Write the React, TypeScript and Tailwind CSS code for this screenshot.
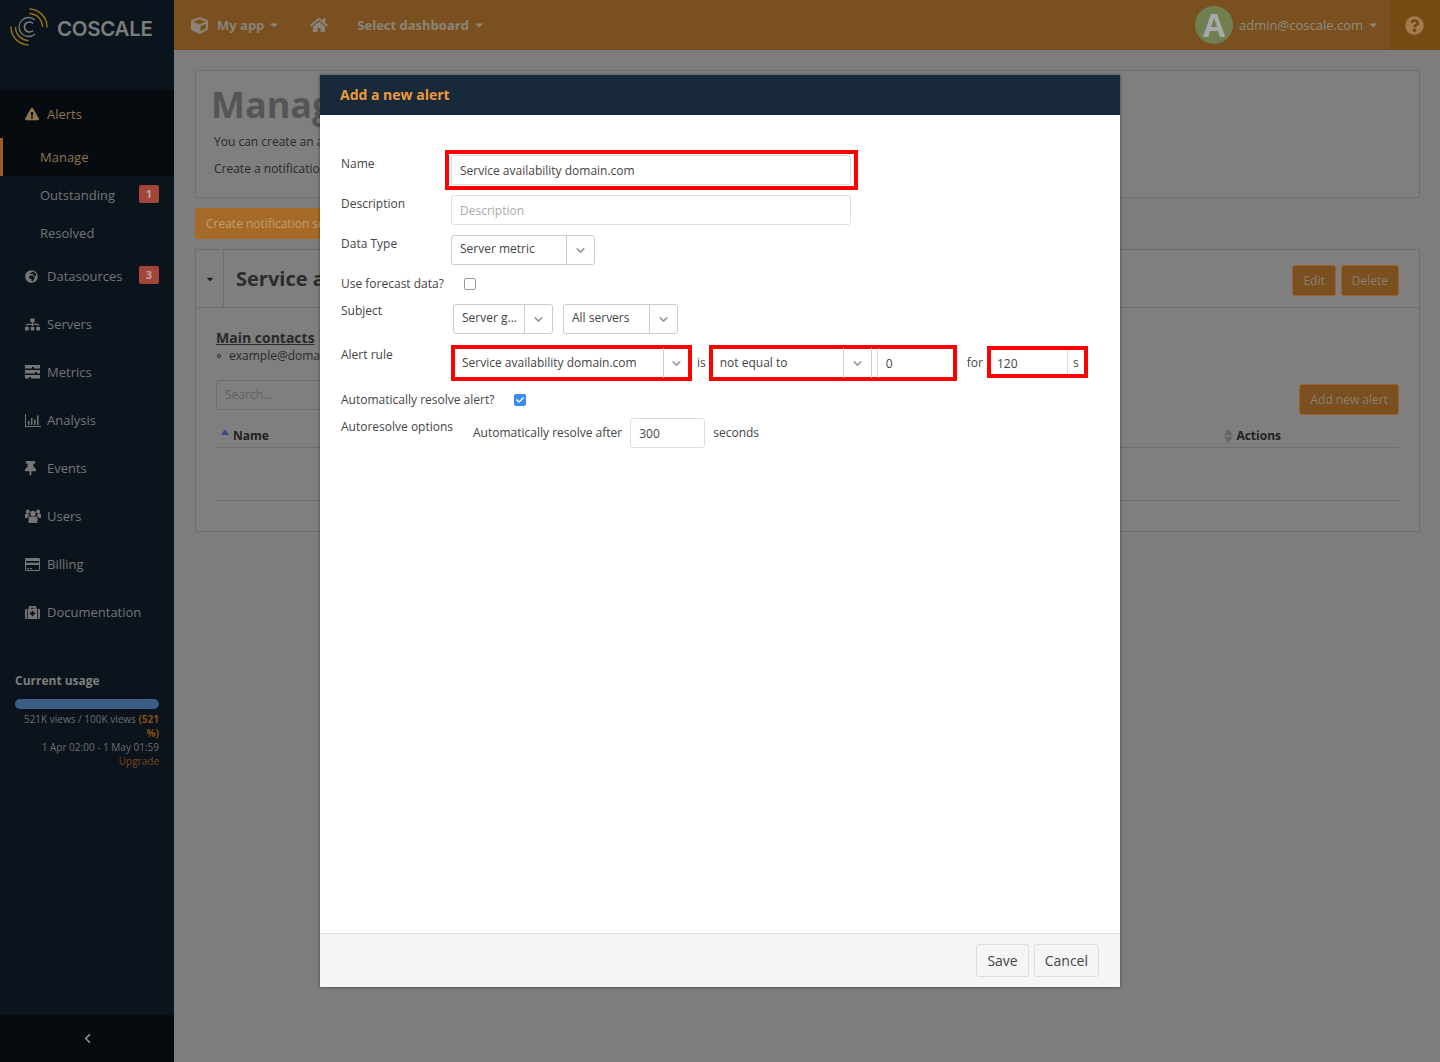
import type { ReactNode } from "react";
import { ChevronDown } from "lucide-react";
import {
  FaCaretDown,
  FaCheck,
  FaChevronLeft,
  FaCube,
  FaExclamationTriangle,
  FaGlobeAfrica,
  FaHome,
  FaMedkit,
  FaQuestionCircle,
  FaSitemap,
  FaThumbtack,
} from "react-icons/fa";

function MetricsIcon() {
  return (
    <svg width="15" height="14" viewBox="0 0 15 14" fill="currentColor">
      <path d="M0 0h15v3.500H9V2H7v1.500H0z" />
      <path d="M0 5h15v3.500h-3V7h-2v1.500H0z" />
      <path d="M0 10h15v3.500H6V12H4v1.500H0z" />
    </svg>
  );
}

function AnalysisIcon() {
  return (
    <svg width="16" height="13" viewBox="0 0 16 13" fill="currentColor">
      <path d="M0 0h1v12h15v1H0z" />
      <path d="M3 7h1.500v4H3zM6 4h1.500v7H6zM9 5.500h1.500V11H9zM12 1.500h1.500V11H12z" />
    </svg>
  );
}

function UsersIcon() {
  return (
    <svg width="16" height="14" viewBox="0 0 16 14" fill="currentColor">
      <circle cx="8" cy="4.500" r="2.800" />
      <circle cx="2.800" cy="2.500" r="2" />
      <circle cx="13.200" cy="2.500" r="2" />
      <path d="M3.500 9.500C3.500 8 4.500 7.500 5.500 7.500h5c1 0 2 .5 2 2V13c0 .6-.5 1-1 1h-7c-.6 0-1-.4-1-1z" />
      <path d="M0 6c0-1 .7-1.500 1.500-1.500h2c-.2 1 .2 1.800 1 2.400-1.200.3-2 1-2.200 2.100H1c-.6 0-1-.4-1-1z" />
      <path d="M16 6c0-1-.7-1.500-1.500-1.500h-2c.2 1-.2 1.800-1 2.400 1.200.3 2 1 2.200 2.100H15c.6 0 1-.4 1-1z" />
    </svg>
  );
}

function CardIcon() {
  return (
    <svg width="15" height="13" viewBox="0 0 15 13" fill="currentColor">
      <path d="M1.500 0h12c.8 0 1.500.7 1.500 1.500v10c0 .8-.7 1.500-1.500 1.500h-12C.7 13 0 12.300 0 11.500v-10C0 .7.700 0 1.500 0zM1 3v1.800h13V3zm0 4v4.500c0 .3.200.5.500.5h12c.3 0 .5-.2.500-.5V7z" fillRule="evenodd" />
      <path d="M2 10h2v1H2zM5 10h2v1H5z" />
    </svg>
  );
}

const navItems = [
  { label: "Datasources", icon: <FaGlobeAfrica size={13} />, badge: "3" },
  { label: "Servers", icon: <FaSitemap size={15} /> },
  { label: "Metrics", icon: <MetricsIcon /> },
  { label: "Analysis", icon: <AnalysisIcon /> },
  { label: "Events", icon: <FaThumbtack size={15} className="-ml-[2px]" /> },
  { label: "Users", icon: <UsersIcon /> },
  { label: "Billing", icon: <CardIcon /> },
  { label: "Documentation", icon: <FaMedkit size={15} /> },
];

function Badge({ value }: { value: string }) {
  return (
    <span className="-mt-[2px] flex h-[18px] w-5 items-center justify-center rounded-[2px] bg-[#a2463a] text-[11px] font-bold text-[#b9a8a4]">
      {value}
    </span>
  );
}

function Logo() {
  return (
    <svg width="38" height="38" viewBox="0 0 38 38" fill="none" className="shrink-0">
      <g stroke="#8f6c17" strokeWidth="1.5" strokeLinecap="round">
        <path d="M20 1a18 18 0 0 1 17 18" />
        <path d="M20 5.500a13.500 13.500 0 0 1 12.500 13" />
        <path d="M18 37a18 18 0 0 1-17-18" />
        <path d="M18 32.500a13.500 13.500 0 0 1-12.500-13" />
      </g>
      <path d="M25 12a9.500 9.500 0 1 0 0 14" stroke="#787878" strokeWidth="1.300" />
      <path d="M23 15.500a5 5 0 1 0 0 7" stroke="#7c7c7c" strokeWidth="1.700" />
    </svg>
  );
}

function Sidebar() {
  return (
    <aside className="flex w-[174px] shrink-0 flex-col bg-[#0b141c] text-[13px] text-[#767676]">
      <div className="flex h-[90px] items-start gap-[9px] pl-[10px] pt-2">
        <Logo />
        <span className="mt-[6px] font-['Inter',sans-serif] text-[20.5px] font-semibold tracking-[-0.3px] text-[#7c7c7c]">COSCALE</span>
      </div>

      <div className="bg-[#060b10]">
        <div className="flex h-12 items-center gap-2 pl-[25px] text-[#8f7450]">
          <FaExclamationTriangle size={14} />
          <span className="mt-[2px]">Alerts</span>
        </div>
        <div className="flex h-[38px] items-center border-l-[3px] border-[#a05c24] pl-[37px] text-[#8f7450]">
          <span className="mt-[2px]">Manage</span>
        </div>
      </div>
      <div className="flex h-[38px] items-center justify-between pl-10 pr-[15px]">
        <span className="mt-[2px]">Outstanding</span>
        <Badge value="1" />
      </div>
      <div className="flex h-[38px] items-center pl-10">
        <span className="mt-[2px]">Resolved</span>
      </div>

      {navItems.map((item) => (
        <div key={item.label} className="flex h-12 items-center pl-[25px] pr-[15px]">
          <span className="flex w-[22px] shrink-0 items-center">{item.icon}</span>
          <span className="mt-[2px] flex-1">{item.label}</span>
          {item.badge && <Badge value={item.badge} />}
        </div>
      ))}

      <div className="flex-1 px-[15px] pt-9">
        <div className="text-[12px] leading-[18px] font-bold text-[#7e7e7e]">Current usage</div>
        <div className="mt-[9px] h-2.5 rounded-[5px] bg-[#3b5e86]" />
        <div className="mt-[3px] text-right text-[10px] leading-[14px] text-[#6e6e6e]">
          521K views / 100K views <span className="font-bold text-[#85500f]">(521 %)</span>
          <br />
          1 Apr 02:00 - 1 May 01:59
          <br />
          <span className="text-[#7c4318]">Upgrade</span>
        </div>
      </div>

      <div className="flex h-[47px] items-center justify-center bg-[#060b10] text-[#8a8a8a]">
        <FaChevronLeft size={11} />
      </div>
    </aside>
  );
}

function TopBar() {
  return (
    <header className="flex h-[50px] items-center bg-[#7a5020] text-[13px] text-[#8a8478]">
      <FaCube size={17} className="ml-[17px] mr-[9px]" />
      <span className="mt-[2px] font-bold">My app</span>
      <FaCaretDown size={12} className="ml-[4px]" />
      <FaHome size={18} className="ml-[30px] mr-[29px]" />
      <span className="mt-[2px] font-bold">Select dashboard</span>
      <FaCaretDown size={12} className="ml-[4px]" />
      <div className="ml-auto flex h-full items-center">
        <span className="flex h-[38px] w-[38px] items-center justify-center rounded-full bg-[#6f7f50] text-[32px] font-bold text-[#a9a9a9]">
          A
        </span>
        <span className="ml-[6px] mt-[2px] text-[#8c8c80]">admin@coscale.com</span>
        <FaCaretDown size={12} className="ml-[4px]" />
        <div className="ml-[11px] flex h-full w-[50px] items-center justify-center bg-[#764a12] pr-[1px] text-[#a07c50]">
          <FaQuestionCircle size={19} />
        </div>
      </div>
    </header>
  );
}

function OrangeButton({ children }: { children: ReactNode }) {
  return (
    <span className="flex h-[31px] items-center rounded-[3px] border border-[#a0602a] bg-[#7a5020] px-[10px] text-[12px] text-[#8a7f70]">
      {children}
    </span>
  );
}

function Page() {
  return (
    <main className="min-w-0 flex-1 bg-[#7d7d7d]">
      <TopBar />
      <div className="pl-[21px] pr-5 pt-5">
        <section className="h-[128px] border border-[#6e6e6e] bg-[#7f7f7f] pl-[16px] text-[12px] text-[#2a2a2a]">
          <h1 className="-ml-[1px] mt-[12px] text-[36px] leading-[44px] font-bold text-[#555]">Manage alerts</h1>
          <p className="ml-[2px] mt-[6px] leading-[18px]">You can create an alert for any metric</p>
          <p className="ml-[2px] mt-[9px] leading-[18px]">Create a notification setting first</p>
        </section>

        <span className="mt-[10px] flex h-[31px] w-fit items-center rounded-[3px] bg-[#a56a28] px-[11px] text-[12px] text-[#c0a070]">
          Create notification setting
        </span>

        <section className="mt-[10px] h-[283px] border border-[#6e6e6e] bg-[#7f7f7f]">
          <div className="flex h-[58px] items-center border-b border-[#6e6e6e] pr-5">
            <div className="flex h-full w-[28px] items-center justify-center border-r border-[#6e6e6e] text-[#222]">
              <FaCaretDown size={10} />
            </div>
            <span className="ml-3 flex-1 text-[20px] font-bold text-[#2c2c2c]">Service availability</span>
            <div className="mt-[4px] flex gap-[5px]">
              <OrangeButton>Edit</OrangeButton>
              <OrangeButton>Delete</OrangeButton>
            </div>
          </div>

          <div className="px-5 text-[12px] text-[#2a2a2a]">
            <div className="mt-[20px] text-[14px] leading-[19px] font-bold underline">Main contacts</div>
            <div className="mt-[1px] flex items-center leading-[16px]">
              <span className="mx-[1px] h-1 w-1 rounded-full border border-[#2a2a2a]" />
              <span className="ml-[7px]">example@domain.com</span>
            </div>

            <div className="mt-[16px] flex items-start justify-between">
              <span className="flex h-[30px] w-[240px] items-center rounded-[3px] border border-[#6e6e6e] px-2 text-[#606060]">
                Search...
              </span>
              <div className="mt-[4px]">
                <OrangeButton>Add new alert</OrangeButton>
              </div>
            </div>

            <div className="flex h-[33px] items-center justify-between border-b border-[#6e6e6e] pl-[5px] pr-[118px] pt-[10px] font-bold text-[#222]">
              <span className="flex items-center gap-1">
                <svg width="8" height="6" viewBox="0 0 8 6" className="-mt-2" fill="#3f4a8a">
                  <path d="M4 0l4 6H0z" />
                </svg>
                Name
              </span>
              <span className="flex items-center gap-[3px]">
                <svg width="9" height="14" viewBox="0 0 9 14" fill="#666">
                  <path d="M4.500 0L9 6.300H0zM4.500 14L0 7.700h9z" />
                </svg>
                Actions
              </span>
            </div>
            <div className="h-[53px] border-b border-[#6e6e6e]" />
          </div>
        </section>
      </div>
    </main>
  );
}

function Field({ children, className = "" }: { children: ReactNode; className?: string }) {
  return (
    <span className={`flex h-[30px] items-center rounded-[3px] border border-[#ddd] bg-white px-2 pt-[2px] text-[#444] ${className}`}>
      {children}
    </span>
  );
}

function Select({
  value,
  className = "",
  cellClass = "w-[28px]",
  square = false,
}: {
  value: string;
  className?: string;
  cellClass?: string;
  square?: boolean;
}) {
  return (
    <span className={`flex h-[30px] items-center border-[#ccc] text-[#444] ${square ? "" : "rounded-[3px] border"} ${className}`}>
      <span className={`flex-1 truncate ${square ? "pl-[7px]" : "-mt-[2px] pl-2"}`}>{value}</span>
      <span className={`flex h-full items-center justify-center border-l border-[#ccc] text-[#999] ${cellClass}`}>
        <ChevronDown size={13} strokeWidth={3} />
      </span>
    </span>
  );
}

function CheckBox({ checked = false }: { checked?: boolean }) {
  return checked ? (
    <span className="flex h-3 w-3 items-center justify-center rounded-[2px] bg-[#3b8bf0] text-white">
      <FaCheck size={8} />
    </span>
  ) : (
    <span className="h-3 w-3 rounded-[2px] border border-[#999] bg-white" />
  );
}

function Label({ children, className = "" }: { children: ReactNode; className?: string }) {
  return <span className={`leading-[18px] ${className}`}>{children}</span>;
}

function AlertModal() {
  return (
    <div className="absolute left-[320px] top-[75px] flex h-[912px] w-[800px] flex-col overflow-hidden bg-white font-['Open_Sans',sans-serif] text-[12px] text-[#444] shadow-[0_0_3px_rgba(0,0,0,0.5)]">
      <div className="flex h-10 shrink-0 items-center bg-[#18293a] pb-[2px] pl-5 text-[14px] font-bold text-[#ee9a3c]">
        Add a new alert
      </div>

      <div className="flex-1 pl-[21px] pt-[35px]">
        <div className="flex h-10 items-start">
          <Label className="mt-[5px] w-[104px]">Name</Label>
          <div className="h-10 w-[413px] border-4 border-[#f00] pl-[2px] pr-[3px] pt-[1px]">
            <Field className="w-full">Service availability domain.com</Field>
          </div>
        </div>

        <div className="mt-[5px] flex">
          <Label className="w-[110px]">Description</Label>
          <Field className="w-[400px] text-[#aaa]">Description</Field>
        </div>

        <div className="mt-[10px] flex">
          <Label className="w-[110px]">Data Type</Label>
          <Select value="Server metric" className="w-[144px]" />
        </div>

        <div className="mt-[7px] flex h-6 items-center">
          <Label className="w-[123px]">Use forecast data?</Label>
          <CheckBox />
        </div>

        <div className="mt-[8px] flex">
          <Label className="-mt-[2px] w-[112px]">Subject</Label>
          <Select value="Server g..." className="w-[100px]" />
          <Select value="All servers" className="ml-[10px] w-[115px]" />
        </div>

        <div className="mt-[11px] flex items-start">
          <Label className="mt-[1px] w-[110px]">Alert rule</Label>
          <div className="h-9 w-[241px] border-4 border-[#f00]">
            <Select value="Service availability domain.com" square cellClass="w-[25px]" className="w-full -mt-[1px]" />
          </div>
          <span className="ml-[5px] mr-[3px] mt-[9px]">is</span>
          <div className="flex h-9 w-[248px] border-4 border-[#f00]">
            <Select value="not equal to" square className="w-[159px] -mt-[1px] border-r" />
            <span className="ml-[5px] -mt-[1px] flex h-[30px] flex-1 items-center rounded-[3px] border-l border-[#ddd] pl-2 pt-[2px]">0</span>
          </div>
          <span className="ml-[10px] mr-1 mt-[9px]">for</span>
          <div className="mt-[1px] flex h-[32px] w-[101px] items-center border-4 border-[#f00]">
            <span className="mt-[4px] flex-1 pl-[6px]">120</span>
            <span className="flex h-full w-[17px] items-center justify-center border-l border-[#ddd] pt-[2px]">s</span>
          </div>
        </div>

        <div className="mt-[7px] flex h-6 items-center">
          <Label className="w-[173px]">Automatically resolve alert?</Label>
          <CheckBox checked />
        </div>

        <div className="mt-[6px] flex items-start">
          <Label className="w-[132px]">Autoresolve options</Label>
          <div className="flex items-center">
            <span>Automatically resolve after</span>
            <Field className="ml-2 w-[75px]">300</Field>
            <span className="ml-2">seconds</span>
          </div>
        </div>
      </div>

      <div className="flex h-[54px] shrink-0 items-center justify-end gap-[5px] border-t border-[#ddd] bg-[#f5f5f5] pr-[21px] text-[14px]">
        <span className="flex h-[33px] items-center rounded-[3px] border border-[#ddd] px-[10px]">Save</span>
        <span className="flex h-[33px] items-center rounded-[3px] border border-[#ddd] px-[10px]">Cancel</span>
      </div>
    </div>
  );
}

export default function App() {
  return (
    <div className="relative flex h-[1062px] w-full overflow-hidden font-['Open_Sans',sans-serif]">
      <Sidebar />
      <Page />
      <AlertModal />
    </div>
  );
}
